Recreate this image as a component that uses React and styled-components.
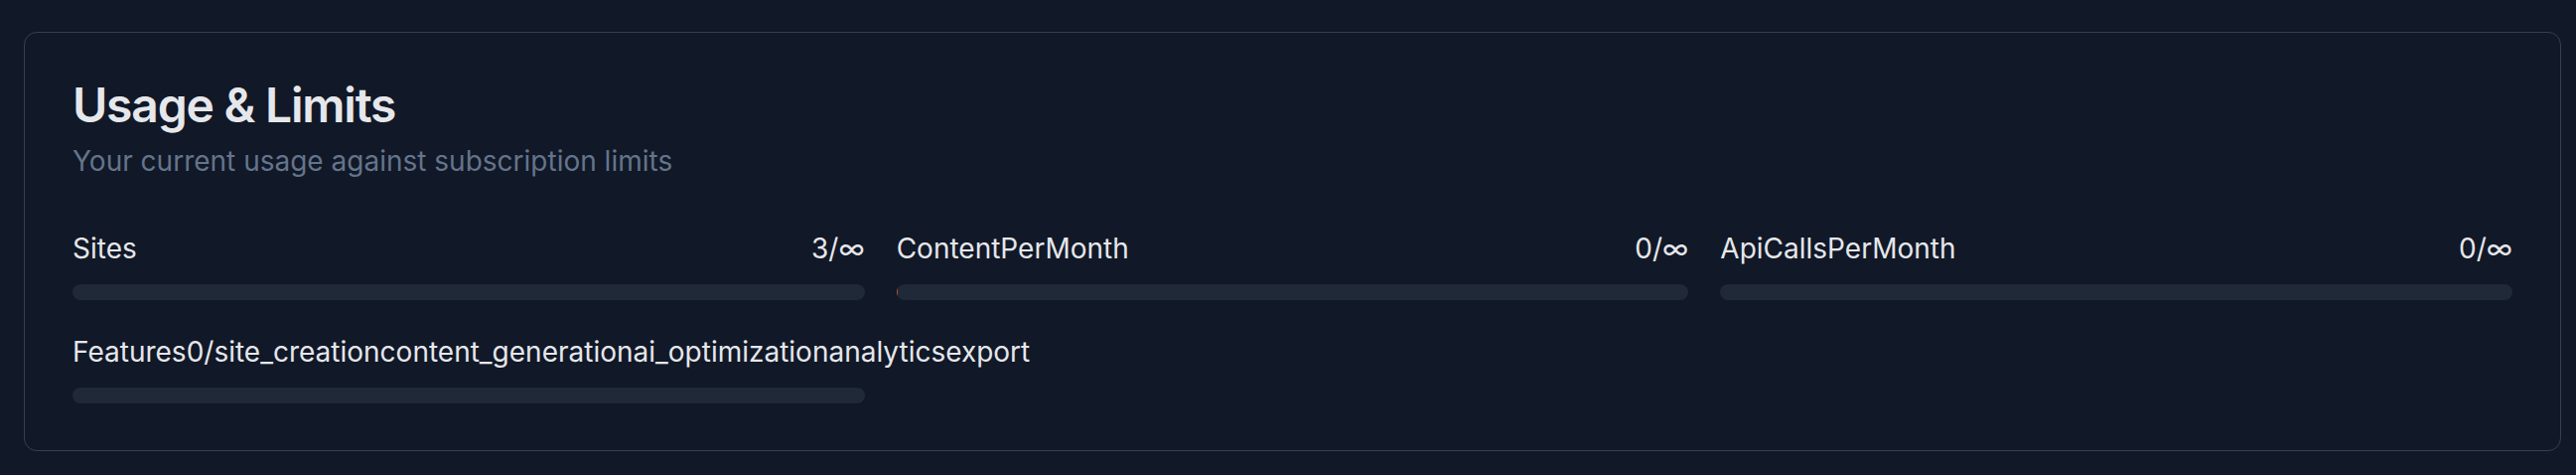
import React from "react";
import styled, { createGlobalStyle } from "styled-components";

const GlobalStyle = createGlobalStyle`
  html, body {
    margin: 0;
    padding: 0;
    background: #111827;
  }
  body {
    font-family: Inter, "Noto Sans", sans-serif;
    color: #e5e7eb;
  }
  * { box-sizing: border-box; }
`;

const Page = styled.div`
  padding: 32px 15px 23px 24px;
  background: #111827;
  min-height: 478px;
`;

const Card = styled.section`
  border: 1px solid #334155;
  border-radius: 13px;
  background: #111827;
`;

const Header = styled.header`
  display: flex;
  flex-direction: column;
  gap: 12px;
  padding: 49px 48px 48px 48px;
`;

const Title = styled.h3`
  margin: 0;
  font-size: 48px;
  line-height: 48px;
  font-weight: 600;
  letter-spacing: -1.2px;
  color: #e5e7eb;
`;

const Description = styled.p`
  margin: 0;
  font-size: 28px;
  line-height: 40px;
  color: #64748b;
`;

const Content = styled.div`
  padding: 0 48px 47px 48px;
  display: grid;
  grid-template-columns: repeat(3, minmax(0, 1fr));
  gap: 32px;
`;

const Metric = styled.div`
  display: flex;
  flex-direction: column;
  gap: 16px;
  min-width: 0;
`;

const LabelRow = styled.div`
  display: flex;
  justify-content: space-between;
  font-size: 28px;
  line-height: 40px;
  color: #e5e7eb;
  white-space: nowrap;
`;

const Track = styled.div`
  position: relative;
  height: 16px;
  border-radius: 999px;
  background: #1f2937;
  overflow: hidden;
`;

const Fill = styled.div`
  height: 100%;
  background: #c2562a;
  border-radius: 999px 0 0 999px;
`;

const metrics = [
  { label: "Sites", value: "3/∞", fill: 0 },
  { label: "ContentPerMonth", value: "0/∞", fill: 1 },
  { label: "ApiCallsPerMonth", value: "0/∞", fill: 0 },
  {
    label:
      "Features0/site_creationcontent_generationai_optimizationanalyticsexport",
    value: "",
    fill: 0,
  },
];

export default function App() {
  return (
    <>
      <GlobalStyle />
      <Page>
        <Card>
          <Header>
            <Title>Usage &amp; Limits</Title>
            <Description>Your current usage against subscription limits</Description>
          </Header>
          <Content>
            {metrics.map((m) => (
              <Metric key={m.label}>
                <LabelRow>
                  <span>{m.label}</span>
                  <span>{m.value}</span>
                </LabelRow>
                <Track>
                  {m.fill > 0 && <Fill style={{ width: `${m.fill}px` }} />}
                </Track>
              </Metric>
            ))}
          </Content>
        </Card>
      </Page>
    </>
  );
}
